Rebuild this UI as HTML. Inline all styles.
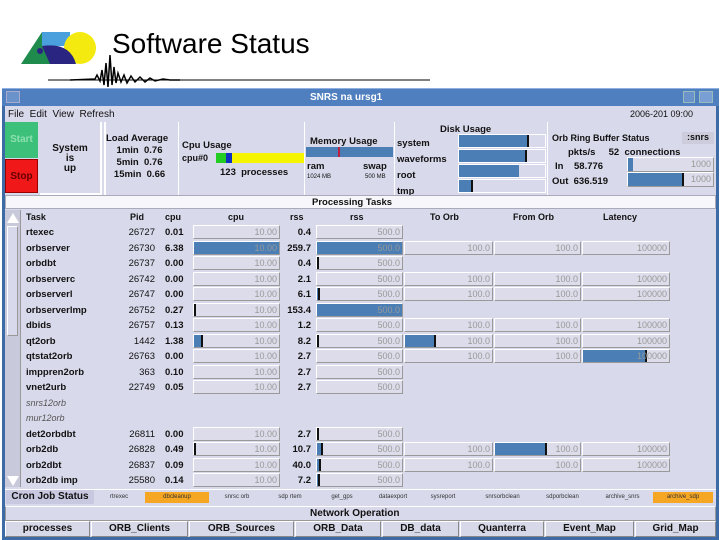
<!DOCTYPE html>
<html><head><meta charset="utf-8"><style>
*{margin:0;padding:0;box-sizing:border-box}
body{width:720px;height:540px;background:#fff;position:relative;overflow:hidden;font-family:"Liberation Sans",sans-serif;font-size:10px;color:#111}
.a{position:absolute}
.b{font-weight:bold}
.bar{position:absolute;height:14px;border-top:1px solid #fff;border-left:1px solid #fff;border-right:1px solid #999;border-bottom:1px solid #999;background:#dcdcea;color:#999;font-size:9px;text-align:right;padding-right:2px;line-height:12px;overflow:hidden}
.bar i{position:absolute;left:0;top:0;bottom:0;background:#4a7eb4;border-right:2px solid #111}
.bar span{position:relative}
.btn{position:absolute;top:521px;height:16px;border:1px solid #888;border-top-color:#fff;border-left-color:#fff;background:#d8d9e8;text-align:center;font-weight:bold;font-size:10px;line-height:14px}
.cron{position:absolute;top:492px;height:11px;font-size:6px;line-height:11px;text-align:center;color:#333}
</style></head><body>
<!-- logo -->
<svg class="a" style="left:18px;top:28px" width="80" height="40">
<polygon points="3,36 24,4 46,36" fill="#1f8b4c"/>
<rect x="24" y="4" width="28" height="14" fill="#4aa0dc"/>
<circle cx="62" cy="20" r="16" fill="#f5ea10"/>
<path d="M24,18 Q52,14 58,36 L32,36 Z" fill="#2a2580"/>
<circle cx="22" cy="23" r="3" fill="#2a2580"/>
</svg>
<div class="a" style="left:112px;top:28px;font-size:28px;color:#000">Software Status</div>
<svg class="a" style="left:45px;top:45px" width="390" height="45">
<line x1="3" y1="35" x2="385" y2="35" stroke="#000" stroke-width="1"/>
<path d="M25,35 L50,34 L52,30 L55,36 L57,25 L59,40 L61,18 L63,42 L65,10 L67,40 L69,22 L71,38 L73,28 L76,37 L79,30 L82,38 L86,31 L90,37 L95,32 L100,37 L105,33 L110,36 L118,34 L125,35 L135,35" stroke="#000" fill="none" stroke-width="1.5"/>
</svg>
<!-- window -->
<div class="a" style="left:2px;top:88px;width:717px;height:452px;background:#3d6ba5"></div>
<div class="a" style="left:2px;top:88px;width:717px;height:18px;background:#4f7fbf;border-top:1px solid #8fb0e0"></div>
<div class="a" style="left:6px;top:91px;width:14px;height:12px;border:1px solid #aac;background:#6a93cc"></div>
<div class="a b" style="left:310px;top:92px;color:#fff;font-size:10px">SNRS na ursg1</div>
<div class="a" style="left:683px;top:91px;width:12px;height:12px;background:#6a93cc;border:1px solid #9bb"></div>
<div class="a" style="left:699px;top:91px;width:14px;height:12px;background:#7a9fd4;border:1px solid #9bb"></div>
<div class="a" style="left:5px;top:106px;width:711px;height:431px;background:#d8d9ea"></div>
<div class="a" style="left:8px;top:109px;font-size:10px">File&nbsp; Edit&nbsp; View&nbsp; Refresh</div>
<div class="a" style="left:630px;top:109px;font-size:9px">2006-201 09:00</div>
<!-- top panel -->
<div class="a" style="left:5px;top:122px;width:33px;height:36px;background:#3cc07a;color:#8fe0b0;font-weight:bold;line-height:36px;text-align:center">Start</div>
<div class="a" style="left:5px;top:159px;width:33px;height:34px;background:#f01818;border:1px solid #900;font-weight:bold;line-height:34px;text-align:center;color:#600">Stop</div>
<div class="a b" style="left:40px;top:122px;width:62px;height:73px;background:#d8d9ea;border-right:2px solid #fff;border-bottom:2px solid #fff;text-align:center;padding-top:22px;line-height:10px">System<br>is<br>up</div>
<div class="a" style="left:104px;top:122px;width:2px;height:73px;background:#fff"></div>
<div class="a b" style="left:106px;top:133px;line-height:12px;font-size:9.5px">Load Average<br>&nbsp;&nbsp;&nbsp;&nbsp;1min&nbsp;&nbsp;0.76<br>&nbsp;&nbsp;&nbsp;&nbsp;5min&nbsp;&nbsp;0.76<br>&nbsp;&nbsp;&nbsp;15min&nbsp;&nbsp;0.66</div>
<div class="a" style="left:178px;top:122px;width:1px;height:73px;background:#fff"></div>
<div class="a b" style="left:182px;top:140px;font-size:9.5px">Cpu Usage</div>
<div class="a b" style="left:182px;top:153px;font-size:9px">cpu#0</div>
<div class="a" style="left:216px;top:153px;width:88px;height:10px;background:#f5f500"></div>
<div class="a" style="left:216px;top:153px;width:10px;height:10px;background:#22cc22"></div>
<div class="a" style="left:226px;top:153px;width:6px;height:10px;background:#1030c0"></div>
<div class="a b" style="left:220px;top:167px;font-size:9.5px">123 &nbsp;processes</div>
<div class="a" style="left:304px;top:122px;width:1px;height:73px;background:#fff"></div>
<div class="a b" style="left:310px;top:136px;font-size:9.5px">Memory Usage</div>
<div class="a" style="left:306px;top:147px;width:87px;height:10px;background:#4a7eb4"></div>
<div class="a" style="left:338px;top:147px;width:2px;height:10px;background:#c02040"></div>
<div class="a b" style="left:307px;top:161px;font-size:9.5px">ram</div>
<div class="a b" style="left:363px;top:161px;font-size:9.5px">swap</div>
<div class="a" style="left:307px;top:174px;font-size:6px">1024 MB</div>
<div class="a" style="left:365px;top:174px;font-size:6px">500 MB</div>
<div class="a" style="left:394px;top:122px;width:1px;height:73px;background:#fff"></div>
<div class="a b" style="left:440px;top:124px;font-size:9.5px">Disk Usage</div>
<div class="a b" style="left:397px;top:136px;line-height:16px;font-size:9.5px">system<br>waveforms<br>root<br>tmp</div>
<div class="a" style="left:458px;top:134px;width:88px;height:14px;border:1px solid #fff"><div style="width:70px;height:12px;background:#4a7eb4;border-right:2px solid #111"></div></div>
<div class="a" style="left:458px;top:149px;width:88px;height:14px;border:1px solid #fff"><div style="width:68px;height:12px;background:#4a7eb4;border-right:2px solid #111"></div></div>
<div class="a" style="left:458px;top:164px;width:88px;height:14px;border:1px solid #fff"><div style="width:60px;height:12px;background:#4a7eb4"></div></div>
<div class="a" style="left:458px;top:179px;width:88px;height:14px;border:1px solid #fff"><div style="width:14px;height:12px;background:#4a7eb4;border-right:2px solid #111"></div></div>
<div class="a" style="left:547px;top:122px;width:1px;height:73px;background:#fff"></div>
<div class="a b" style="left:552px;top:133px;font-size:9px">Orb Ring Buffer Status</div>
<div class="a b" style="left:682px;top:132px;width:32px;height:12px;background:#ccd;font-size:9px;text-align:center">:snrs</div>
<div class="a b" style="left:568px;top:147px;font-size:9.5px">pkts/s &nbsp; &nbsp; 52 &nbsp;connections</div>
<div class="a b" style="left:555px;top:161px;font-size:9.5px">In &nbsp; &nbsp;58.776</div>
<div class="a b" style="left:552px;top:176px;font-size:9.5px">Out &nbsp;636.519</div>
<div class="bar" style="left:627px;top:157px;width:87px;height:15px"><i style="width:5px;border:0"></i><span>1000</span></div>
<div class="bar" style="left:627px;top:172px;width:87px;height:15px"><i style="width:56px"></i><span>1000</span></div>
<!-- processing tasks -->
<div class="a" style="left:5px;top:195px;width:711px;height:14px;background:#f6f6fb;border:1px solid #aab"></div>
<div class="a b" style="left:312px;top:197px;font-size:9.5px">Processing Tasks</div>
<div class="a" style="left:5px;top:210px;width:16px;height:277px;background:#c8c9da;border-right:1px solid #999"></div>
<div class="a" style="left:7px;top:213px;width:0;height:0;border-left:6px solid transparent;border-right:6px solid transparent;border-bottom:10px solid #fff"></div>
<div class="a" style="left:7px;top:226px;width:11px;height:110px;background:#d8d9ea;border:1px solid #999;border-top-color:#fff;border-left-color:#fff"></div>
<div class="a" style="left:7px;top:476px;width:0;height:0;border-left:6px solid transparent;border-right:6px solid transparent;border-top:10px solid #fff"></div>
<div class="a b" style="left:26px;top:212px;font-size:9px">Task</div>
<div class="a b" style="left:130px;top:212px;font-size:9px">Pid</div>
<div class="a b" style="left:165px;top:212px;font-size:9px">cpu</div>
<div class="a b" style="left:228px;top:212px;font-size:9px">cpu</div>
<div class="a b" style="left:290px;top:212px;font-size:9px">rss</div>
<div class="a b" style="left:350px;top:212px;font-size:9px">rss</div>
<div class="a b" style="left:430px;top:212px;font-size:9px">To Orb</div>
<div class="a b" style="left:513px;top:212px;font-size:9px">From Orb</div>
<div class="a b" style="left:603px;top:212px;font-size:9px">Latency</div>
<div id="rows"></div>
<!-- cron -->
<div class="a" style="left:5px;top:489px;width:711px;height:16px;background:#d8d9ea;border-top:1px solid #fff"></div>
<div class="a b" style="left:6px;top:490px;width:88px;height:14px;background:#c8c9e0;font-size:10px;line-height:14px;text-align:center">Cron Job Status</div>
<div class="cron" style="left:98px;width:42px">rtrexec</div>
<div class="cron" style="left:145px;width:64px;background:#f5a623">dbcleanup</div>
<div class="cron" style="left:212px;width:50px">snrsc orb</div>
<div class="cron" style="left:265px;width:50px">sdp rtem</div>
<div class="cron" style="left:317px;width:50px">get_gps</div>
<div class="cron" style="left:368px;width:50px">dataexport</div>
<div class="cron" style="left:418px;width:50px">sysreport</div>
<div class="cron" style="left:475px;width:55px">snrsorbclean</div>
<div class="cron" style="left:535px;width:55px">sdporbclean</div>
<div class="cron" style="left:595px;width:55px">archive_snrs</div>
<div class="cron" style="left:653px;width:60px;background:#f5a623">archive_sdp</div>
<div class="a" style="left:5px;top:506px;width:711px;height:15px;background:#d8d9ea;border:1px solid #999;border-top-color:#fff"></div>
<div class="a b" style="left:310px;top:508px;font-size:10px">Network Operation</div>
<div class="btn" style="left:5px;width:85px">processes</div>
<div class="btn" style="left:91px;width:97px">ORB_Clients</div>
<div class="btn" style="left:189px;width:105px">ORB_Sources</div>
<div class="btn" style="left:295px;width:86px">ORB_Data</div>
<div class="btn" style="left:382px;width:77px">DB_data</div>
<div class="btn" style="left:460px;width:84px">Quanterra</div>
<div class="btn" style="left:545px;width:89px">Event_Map</div>
<div class="btn" style="left:635px;width:81px">Grid_Map</div>
<script>
var R=[
["rtexec","26727","0.01",0,"0.4",-1,0],
["orbserver","26730","6.38",1,"259.7",1,[0,0,0]],
["orbdbt","26737","0.00",0,"0.4",0.01,0],
["orbserverc","26742","0.00",0,"2.1",-1,[0,0,0]],
["orbserverl","26747","0.00",0,"6.1",0.03,[0,0,0]],
["orbserverlmp","26752","0.27",0.01,"153.4",1,0],
["dbids","26757","0.13",0,"1.2",-1,[0,0,0]],
["qt2orb","1442","1.38",0.1,"8.2",0.01,[0.35,0,0]],
["qtstat2orb","26763","0.00",0,"2.7",-1,[0,0,0.73]],
["imppren2orb","363","0.10",0,"2.7",-1,0],
["vnet2urb","22749","0.05",0,"2.7",-1,0],
["snrs12orb"],["mur12orb"],
["det2orbdbt","26811","0.00",0,"2.7",0.01,0],
["orb2db","26828","0.49",0.01,"10.7",0.07,[0,0.6,0]],
["orb2dbt","26837","0.09",0,"40.0",0.05,[0,0,0]],
["orb2db imp","25580","0.14",0,"7.2",0.04,0]];
var h="";
function bar(x,w,y,f,t){var i=f>0?'<i style="width:'+Math.max(2,Math.round(f*w))+'px'+(f>=1?';border:0':'')+'"></i>':'';return '<div class="bar" style="left:'+x+'px;top:'+y+'px;width:'+w+'px">'+i+'<span>'+t+'</span></div>';}
R.forEach(function(r,k){var y=225+k*15.5;
if(r.length==1){h+='<div class="a" style="left:26px;top:'+(y+2)+'px;font-style:italic;font-size:9px;color:#555">'+r[0]+'</div>';return;}
h+='<div class="a b" style="left:26px;top:'+(y+2)+'px;font-size:9.5px">'+r[0]+'</div>';
h+='<div class="a" style="left:110px;width:45px;text-align:right;top:'+(y+2)+'px;font-size:9.5px">'+r[1]+'</div>';
h+='<div class="a b" style="left:165px;top:'+(y+2)+'px;font-size:9.5px">'+r[2]+'</div>';
h+=bar(193,87,y,r[3],"10.00");
h+='<div class="a b" style="left:286px;width:25px;text-align:right;top:'+(y+2)+'px;font-size:9.5px">'+r[4]+'</div>';
h+=bar(316,87,y,r[5],"500.0");
if(r[6]){h+=bar(404,89,y,r[6][0],"100.0")+bar(494,87,y,r[6][1],"100.0")+bar(582,88,y,r[6][2],"100000");}
});
document.getElementById("rows").innerHTML=h;
</script>
</body></html>
